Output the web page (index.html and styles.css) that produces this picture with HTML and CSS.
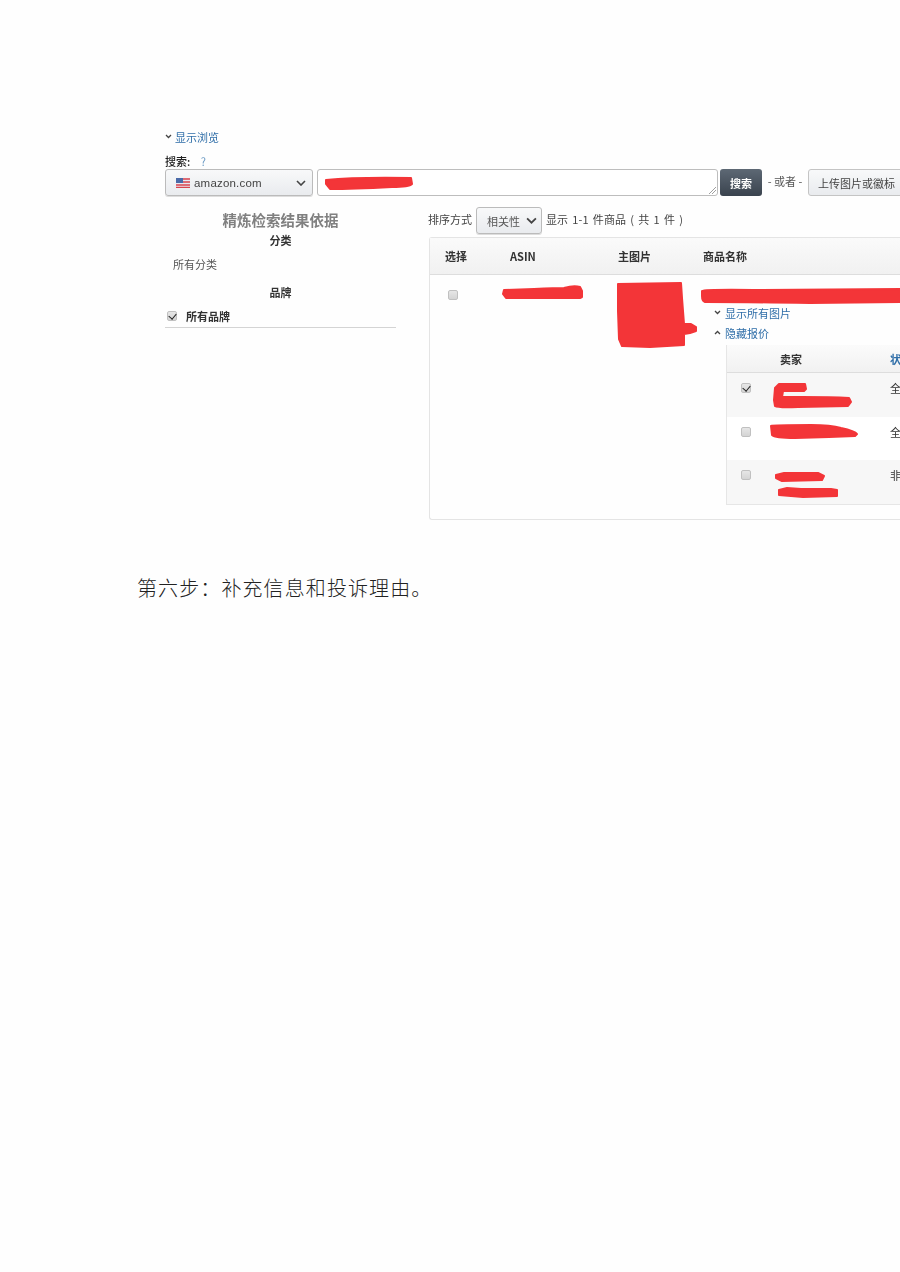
FILE: index.html
```html
<!DOCTYPE html>
<html lang="zh">
<head>
<meta charset="utf-8">
<title>第六步</title>
<link rel="stylesheet" href="styles.css">
</head>
<body>
<main class="doc">
  <section class="shot">
    <div class="toggle"><svg class="chev" viewBox="0 0 10 6" width="10" height="6"><path d="M1 1l2.5 2.5L6 1" fill="none" stroke="#444" stroke-width="1.3"/></svg><a>显示浏览</a></div>
    <div class="search-label"><b>搜索:</b><span class="help">?</span></div>
    <div class="search-row">
      <div class="select market">
        <svg class="flag" viewBox="0 0 14 10" width="14" height="10"><rect width="14" height="10" fill="#e8e8f0"/><path d="M0 1h14M0 4h14M0 7h14M0 9.3h14" stroke="#d9434e" stroke-width="1.3"/><rect width="7" height="5" fill="#4a6aa8"/></svg>
        <span class="market-name">amazon.com</span>
        <svg class="caret" viewBox="0 0 10 6" width="10" height="6"><path d="M1 1l4 4 4-4" fill="none" stroke="#444" stroke-width="1.6"/></svg>
      </div>
      <div class="textarea">
        <svg class="grip" viewBox="0 0 8 8" width="8" height="8"><path d="M1 8l7-7M4 8l4-4" stroke="#888" stroke-width=".8"/></svg>
      </div>
      <div class="btn-search">搜索</div>
      <div class="or">- 或者 -</div>
      <div class="btn-upload">上传图片或徽标</div>
    </div>
    <div class="results">
      <aside class="facets">
        <h2>精炼检索结果依据</h2>
        <h3 class="facet-cat">分类</h3>
        <p class="all-cat">所有分类</p>
        <h3 class="facet-brand">品牌</h3>
        <label class="brand-row"><span class="check on"></span><b>所有品牌</b></label>
      </aside>
      <div class="listing">
        <div class="sort-row">
          <span>排序方式</span>
          <div class="select sort"><b>相关性</b><svg class="caret" viewBox="0 0 10 6" width="11" height="7"><path d="M1 1l4 4 4-4" fill="none" stroke="#444" stroke-width="1.6"/></svg></div>
          <span class="count">显示 1-1 件商品 ( 共 1 件 )</span>
        </div>
        <div class="table">
          <div class="thead">
            <span class="c-select">选择</span><span class="c-asin">ASIN</span><span class="c-image">主图片</span><span class="c-name">商品名称</span>
          </div>
          <div class="tbody">
            <div class="c-select cell-check"><span class="check"></span></div>
            <div class="c-asin"></div>
            <div class="c-image"></div>
            <div class="c-name detail">
              <div class="links">
                <div class="link"><svg class="chev" viewBox="0 0 10 6" width="10" height="6"><path d="M1 1l2.5 2.5L6 1" fill="none" stroke="#444" stroke-width="1.3"/></svg><a>显示所有图片</a></div>
                <div class="link"><svg class="chev" viewBox="0 0 10 6" width="10" height="6"><path d="M1 4l2.5-2.5L6 4" fill="none" stroke="#444" stroke-width="1.3"/></svg><a>隐藏报价</a></div>
              </div>
              <div class="offers">
                <div class="o-head"><span class="o-seller">卖家</span><a class="o-status">状态</a></div>
                <div class="o-row tint"><span class="check on"></span><span class="o-seller"></span><span class="o-status">全新</span></div>
                <div class="o-row"><span class="check"></span><span class="o-seller"></span><span class="o-status">全新</span></div>
                <div class="o-row tint"><span class="check"></span><span class="o-seller"></span><span class="o-status">非全新</span></div>
              </div>
            </div>
          </div>
        </div>
      </div>
    </div>
    <svg class="redact" viewBox="165 130 735 400" width="735" height="400" aria-hidden="true">
      <g fill="#f33538" stroke="#f33538" stroke-width="2" stroke-linejoin="round" stroke-linecap="round">
        <path d="M326 180q30-3 85-2l1 6q-3 3-20 3-40 2-62 2l-4-5z"/>
        <path d="M504 290l30-1q22-1 30-1 10-3 16-1l2 4v6l-2 1h-74l-3-4z"/>
        <path d="M618 284l63-1 1 15 2 26 7 0 5 3 0 4-6 2-6 1 0 11-34 2-28-1-3-7-1-28z"/>
        <path d="M702 291q3-2 60-1l138 -1v13l-90 1q-70-1-105-1-3-1-3-6z"/>
        <path d="M779 384h26l1 5-2 2h-21l-1 6h20q30 0 47 1l2 4-3 4-50 1q-20 1-23-1l-1-6 1-12z"/>
        <path d="M771 426q2-1 40-1 20 0 30 3 14 3 16 6l-2 2-26 1-34 1q-20 0-23-3z"/>
        <path d="M776 475l8-2h34l6 3-2 4-40 1-6-3z"/>
        <path d="M779 490l8-2 14 1h30l6 1v6l-34 1-24-2z"/>
      </g>
    </svg>
  </section>
  <p class="step">第六步：补充信息和投诉理由。</p>
</main>
</body>
</html>
```
FILE: styles.css
```css
* { box-sizing: border-box; }
html, body { margin: 0; height: 100%; background: #fefefe; overflow: hidden; }
body { font-family: "Noto Sans CJK SC", "Liberation Sans", sans-serif; color: #333; }
.doc { padding-top: 129px; }
.shot {
  position: relative;
  margin-left: 165px;
  width: 735px;
  height: 401px;
  overflow: hidden;
  font-size: 11px;
  line-height: 16px;
  filter: blur(.6px);
}
a { color: #2f6ea8; }
.chev { flex: none; }
.toggle { height: 16px; display: flex; align-items: center; font-size: 11px; }
.search-label { margin-top: 9px; height: 14px; display: flex; align-items: center; gap: 6px; margin-bottom: 1px; }
.search-label b { font-weight: 500; color: #222; font-size: 11px; }
.help { color: #6a9ac4; font-size: 11px; width: 14px; text-align: center; }
.search-row { display: flex; align-items: stretch; height: 27px; white-space: nowrap; }
.select {
  display: flex; align-items: center;
  border: 1px solid #bbb; border-radius: 3px;
  background: linear-gradient(#f8f9fa, #e9ebee);
  box-shadow: 0 1px 0 #ddd;
}
.market { width: 148px; padding: 0 6px 0 10px; flex: none; }
.flag { flex: none; margin-right: 4px; }
.market-name { font-family: "Liberation Sans", sans-serif; font-size: 11.5px; letter-spacing: .2px; color: #444; }
.caret { margin-left: auto; flex: none; }
.textarea {
  position: relative; width: 401px; margin-left: 4px; flex: none;
  border: 1px solid #bdbdbd; border-radius: 3px; background: #fff;
}
.grip { position: absolute; right: 1px; bottom: 1px; }
.btn-search {
  width: 42px; margin-left: 2px; flex: none;
  display: flex; align-items: center; justify-content: center;
  border-radius: 3px;
  background: linear-gradient(#5d6874, #3a434e);
  color: #fff; font-size: 11px; font-weight: 700;
}
.or { width: 46px; flex: none; text-align: center; font-size: 11px; color: #555; line-height: 24px; }
.btn-upload {
  flex: none; width: 130px; padding-left: 9px;
  display: flex; align-items: center;
  border: 1px solid #c4c4c4; border-radius: 3px;
  background: linear-gradient(#f8f9fa, #e9ebee); font-size: 11px; color: #444;
}
.results { display: flex; margin-top: 11px; }
.facets { width: 231px; flex: none; }
.facets h2 { margin: 3px 0 0; font-size: 14.5px; line-height: 20px; text-align: center; color: #808080; font-weight: 700; }
.facets h3 { margin: 0; font-size: 11px; line-height: 16px; text-align: center; color: #333; font-weight: 700; }
.facet-cat { margin-top: 2px !important; }
.all-cat { margin: 8px 0 0 8px; color: #555; line-height: 16px; }
.facet-brand { margin-top: 12px !important; }
.brand-row {
  display: flex; align-items: center; gap: 9px; margin-top: 8px; padding: 0 0 4px 2px;
  height: 20px; border-bottom: 1px solid #d4d4d4;
}
.brand-row b { font-weight: 700; color: #333; }
.check {
  display: inline-block; position: relative; flex: none;
  width: 10px; height: 10px; border: 1px solid #c0c0c0; border-radius: 2px;
  background: linear-gradient(#e6e6e6, #d4d4d4);
}
.check.on::after {
  content: ""; position: absolute; left: 2px; top: 0;
  width: 4px; height: 6px; border: solid #222; border-width: 0 1.8px 1.8px 0;
  transform: rotate(40deg);
}
.listing { margin-left: 32px; flex: none; width: 560px; }
.sort-row { display: flex; align-items: center; height: 27px; white-space: nowrap; color: #444; }
.sort-row > span { margin-bottom: 4px; }
.count { word-spacing: 1.6px; letter-spacing: .1px; }
.sort { width: 66px; height: 27px; margin: 0 4px 0 4px; padding: 0 4px 0 10px; color: #555; font-size: 11px; }
.sort b { font-weight: 400; }
.table {
  margin: 3px 0 0 1px; height: 283px; width: 560px;
  border: 1px solid #e4e4e4; border-right: 0; border-radius: 3px 0 0 3px;
}
.thead {
  height: 37px; display: flex; align-items: center;
  background: linear-gradient(#fafafa, #f1f1f1);
  border-bottom: 1px solid #ddd;
  font-weight: 700; color: #333;
}
.c-select { width: 80px; padding-left: 15px; flex: none; }
.c-asin { width: 108px; flex: none; }
.c-image { width: 85px; flex: none; }
.c-name { flex: none; }
.tbody { display: flex; padding-top: 15px; }
.cell-check { padding-left: 18px; line-height: 10px; }
.detail { padding-top: 15px; }
.links { margin-left: 11px; }
.link { height: 20px; line-height: 16px; font-size: 11px; display: flex; align-items: center; padding-bottom: 4px; }
.link a { margin-left: 1px; }
.offers {
  margin: 0 0 0 23px; width: 260px;
  border: 1px solid #e6e6e6; border-right: 0; border-top: 0;
}
.o-head {
  height: 28px; display: flex; align-items: center; padding-left: 53px;
  background: linear-gradient(#fbfbfb, #f1f1f1);
  border-bottom: 1px solid #ddd; font-weight: 700;
}
.o-row { height: 43.7px; display: flex; align-items: flex-start; padding: 10px 0 0 14px; background: #fff; }
.o-row.tint { background: #f7f7f7; }
.o-row .o-seller { margin-left: 29px; }
.o-seller { width: 110px; flex: none; }
.o-head .o-seller { margin-left: 0; }
.o-status { flex: none; color: #333; }
a.o-status { color: #2f6ea8; }
.o-row .o-status { margin-top: -3px; }
.redact { position: absolute; left: 0; top: 1px; }
.step {
  margin: 44px 0 0 137px;
  font-size: 20px; line-height: 28px; letter-spacing: 1.1px; color: #222; font-weight: 300;
}
```
